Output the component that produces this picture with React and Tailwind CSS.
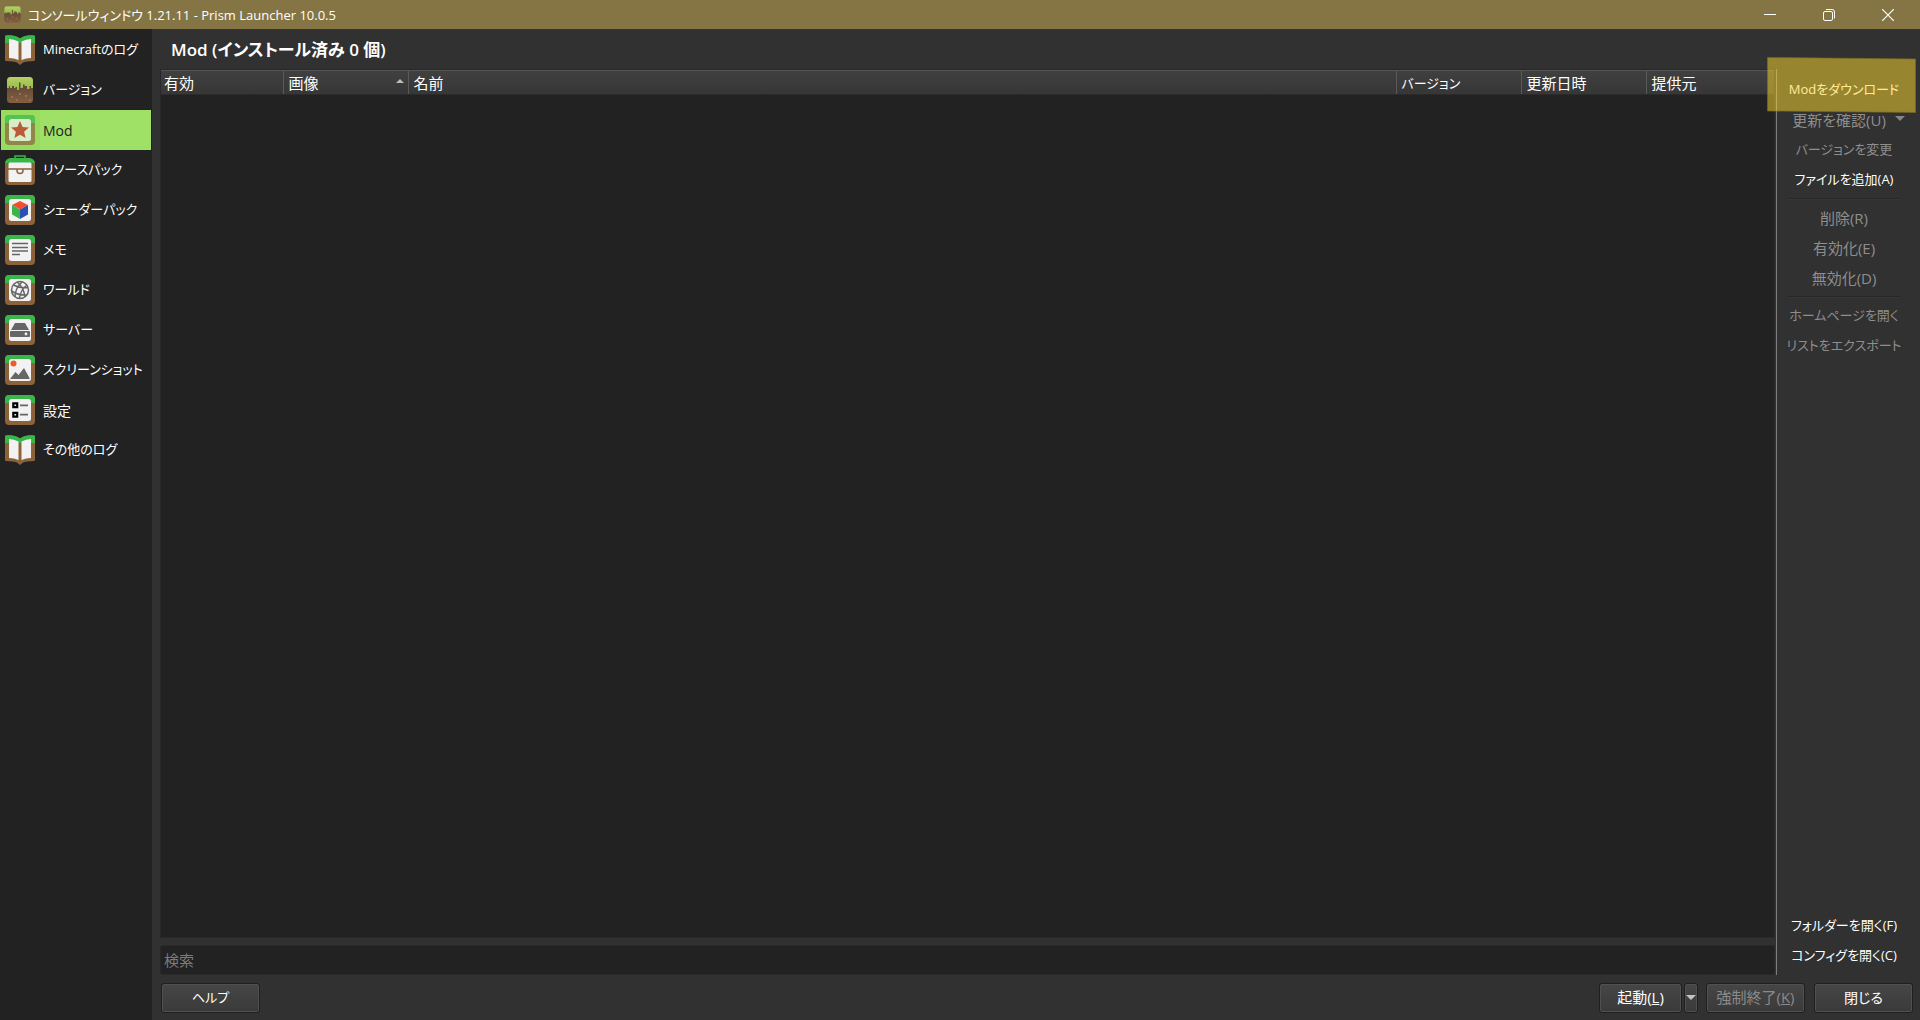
import React, { useState } from "react";

const GRASS =
  "M0 8V4a4 4 0 0 1 4-4h22a4 4 0 0 1 4 4v4h-4V6a2 2 0 0 0-2-2H6a2 2 0 0 0-2 2v2z";

/** Grass block frame that most of the page icons sit in. */
const BlockIcon = ({ tinted = false, children }) => (
  <svg viewBox="0 0 30 30" className="w-[30px] h-[30px] shrink-0" aria-hidden="true">
    <rect width="30" height="30" rx="4" fill={tinted ? "#91864a" : "#8b6239"} />
    <path d={GRASS} fill={tinted ? "#54c353" : "#39b54a"} />
    <rect x="4" y="4" width="22" height="22" rx="2.5" fill={tinted ? "#d9eec8" : "#f2f2f2"} />
    {children}
  </svg>
);

const LogIcon = () => (
  <svg viewBox="0 0 30 30" className="w-[30px] h-[30px] shrink-0" aria-hidden="true">
    <path d="M0 1.5Q0 .5 1 .5C6 0 11 .5 15 3.5 19 .5 24 0 29 .5q1 0 1 1V25q0 1-1 1-7 0-11 1.5L15 30l-3-2.5Q8 26 1 26q-1 0-1-1z" fill="#8b6239" />
    <path d="M0 1.5Q0 .5 1 .5C6 0 11 .5 15 3.5 19 .5 24 0 29 .5q1 0 1 1V8h-4V5L15 8 4 5v3H0z" fill="#39b54a" />
    <path d="M4 4q5 0 9.500 2.500V25Q9 23 4 23zM26 4q-5 0-9.500 2.500V25q4.500-2 9.500-2z" fill="#f2f2f2" />
  </svg>
);

const GrassIcon = ({ className = "w-[30px] h-[30px] shrink-0" }) => (
  <svg viewBox="0 0 30 30" className={className} aria-hidden="true">
    <defs>
      <linearGradient id="dirt" x1="0" y1="0" x2="0" y2="1">
        <stop offset="0" stopColor="#4f3a2a" />
        <stop offset=".5" stopColor="#6b4e3a" />
        <stop offset="1" stopColor="#85603f" />
      </linearGradient>
      <linearGradient id="turf" x1="0" y1="0" x2="0" y2="1">
        <stop offset="0" stopColor="#b8d067" />
        <stop offset="1" stopColor="#8fbb45" />
      </linearGradient>
    </defs>
    <rect x="2" y="2" width="26" height="26" rx="3.500" fill="url(#dirt)" />
    <path d="M2 13V5.500Q2 2 5.500 2h19Q28 2 28 5.500V13h-2v-2h-1.500v3H22v-3h-2.500v-1.500H18V13h-2.500V7.500h-1.500V15h-2v-3h-1.500v1H9v-2H7v2H5v-2H4v2z" fill="url(#turf)" />
    <path d="M6 21h2v2H6zM14 18h2v2h-2zM20 20h2v2h-2zM24 24h2v2h-2zM11 24h2v2h-2z" fill="#97704f" />
  </svg>
);

const ModIcon = () => (
  <BlockIcon tinted>
    <path d="M15 6l2.600 6 6.400.600-4.900 4.200 1.500 6.200-5.600-3.300L9.400 23l1.500-6.200L6 12.600l6.400-.600z" fill="#b85c38" />
  </BlockIcon>
);

const ResourceIcon = () => (
  <svg viewBox="0 0 30 30" className="w-[30px] h-[30px] shrink-0" aria-hidden="true">
    <path d="M10 4V1h10v3" fill="none" stroke="#39b54a" strokeWidth="1.500" />
    <path d="M0 8q0-2 2-3.500Q4 3 6 3h18q2 0 4 1.500Q30 6 30 8v18a4 4 0 0 1-4 4H4a4 4 0 0 1-4-4z" fill="#8b6239" />
    <path d="M0 8q0-2 2-3.500Q4 3 6 3h18q2 0 4 1.500Q30 6 30 8z" fill="#39b54a" />
    <rect x="3.500" y="7.500" width="23" height="19.500" rx="1.500" fill="#f2f2f2" />
    <path d="M3 14h24M12 14v1.500a3 3 0 0 0 6 0V14" fill="none" stroke="#8b6239" strokeWidth="1.500" />
  </svg>
);

const ShaderIcon = () => (
  <BlockIcon>
    <path d="M15 6l8 4-8 4.500L7 10z" fill="#f1502f" />
    <path d="M7 10l8 4.500V24l-8-4.500z" fill="#39b54a" />
    <path d="M23 10l-8 4.500V24l8-4.500z" fill="#2a4fb0" />
  </BlockIcon>
);

const NotesIcon = () => (
  <BlockIcon>
    <path d="M7 8.500h16M7 12.500h16M7 16h16M7 19.500h8" stroke="#666" strokeWidth="1.700" />
  </BlockIcon>
);

const WorldIcon = () => (
  <BlockIcon>
    <g fill="none" stroke="#666" strokeWidth="1.500">
      <circle cx="15" cy="15" r="8.500" />
      <path d="M8.500 10q6 3.500 14.500 2.500M6.500 16q7 4.500 15.500 4M12 7q6.500 4.500 8 15M17.500 6.500Q10 13 10 22M22 10q-6.500 5-7.500 13" />
    </g>
  </BlockIcon>
);

const ServerIcon = () => (
  <BlockIcon>
    <path d="M10 8h10l4 7H6z" fill="#666" />
    <rect x="5" y="16" width="20" height="6" rx="1" fill="#666" />
    <circle cx="21" cy="19" r="1.400" fill="#f2f2f2" />
  </BlockIcon>
);

const ScreenshotIcon = () => (
  <BlockIcon>
    <circle cx="8.500" cy="8.500" r="3" fill="#f15a29" />
    <path d="M5 24l5.500-7 3 3L19 13l5.500 10v1z" fill="#666" />
  </BlockIcon>
);

const SettingsIcon = () => (
  <BlockIcon>
    <path d="M8.300 8.300h3.900v3.900H8.300zM8.300 17.800h3.900v3.900H8.300z" fill="none" stroke="#000" strokeWidth="2.200" />
    <path d="M15 10.300h8M15 19.700h8" stroke="#666" strokeWidth="1.700" />
  </BlockIcon>
);

const PAGES = [
  { id: "log", label: "Minecraftのログ", Icon: LogIcon },
  { id: "version", label: "バージョン", Icon: GrassIcon },
  { id: "mods", label: "Mod", Icon: ModIcon, wide: true },
  { id: "resource", label: "リソースパック", Icon: ResourceIcon },
  { id: "shader", label: "シェーダーパック", Icon: ShaderIcon },
  { id: "notes", label: "メモ", Icon: NotesIcon },
  { id: "worlds", label: "ワールド", Icon: WorldIcon },
  { id: "servers", label: "サーバー", Icon: ServerIcon },
  { id: "screenshots", label: "スクリーンショット", Icon: ScreenshotIcon },
  { id: "settings", label: "設定", Icon: SettingsIcon, wide: true },
  { id: "otherlogs", label: "その他のログ", Icon: LogIcon },
];

const COLUMNS = [
  { label: "有効", width: "w-[122px]", text: "pl-[3px] text-[15px]" },
  { label: "画像", width: "w-[125px]", text: "pl-[5px] text-[15px]", sorted: true },
  { label: "名前", width: "w-auto", text: "pl-[5px] text-[15px]" },
  { label: "バージョン", width: "w-[125px]", text: "pl-[5px] text-[13px]" },
  { label: "更新日時", width: "w-[125px]", text: "pl-[5px] text-[15px]" },
  { label: "提供元", width: "w-[128px]", text: "pl-[5px] text-[15px]" },
];

const TitleBar = () => (
  <header className="flex items-center h-[29px] px-[3px] bg-[#857545] shrink-0">
    <GrassIcon className="w-[19px] h-[19px] shrink-0" />
    <h1 className="ml-1.5 text-[13px] leading-5 text-white whitespace-nowrap">
      コンソールウィンドウ 1.21.11 - Prism Launcher 10.0.5
    </h1>
    <div className="flex h-full ml-auto">
      <button type="button" aria-label="最小化" className="flex items-center justify-center w-[59px]">
        <svg viewBox="0 0 12 12" className="w-3 h-3" aria-hidden="true">
          <path d="M0 5.500h12" stroke="#fff" />
        </svg>
      </button>
      <button type="button" aria-label="元に戻す" className="flex items-center justify-center w-[59px]">
        <svg viewBox="0 0 12 12" className="w-3 h-3" fill="none" stroke="#fff" aria-hidden="true">
          <rect x=".5" y="2.500" width="9" height="9" rx="1.500" />
          <path d="M3 .5h6a2.500 2.500 0 0 1 2.500 2.500v6.500" />
        </svg>
      </button>
      <button type="button" aria-label="閉じる" className="flex items-center justify-center w-[59px]">
        <svg viewBox="0 0 12 12" className="w-3 h-3" aria-hidden="true">
          <path d="M0 0l12 12M12 0L0 12" stroke="#fff" strokeWidth="1.200" />
        </svg>
      </button>
    </div>
  </header>
);

const Sidebar = ({ active, onSelect }) => (
  <nav className="w-[152px] shrink-0 pt-px px-px bg-[#222222]">
    {PAGES.map(({ id, label, Icon, wide }) => (
      <button
        key={id}
        type="button"
        onClick={() => onSelect(id)}
        className={`flex items-center w-full h-10 pl-1 text-left ${
          active === id ? "bg-[#97dc5e] text-[#222222]" : "text-white"
        }`}
      >
        <Icon />
        <span
          className={`flex items-center flex-1 h-full ml-[5px] pl-[3px] whitespace-nowrap ${
            wide ? "text-[14px]" : "text-[13px]"
          } ${active === id ? "bg-[#9fe067]" : ""}`}
        >
          {label}
        </span>
      </button>
    ))}
  </nav>
);

const ModTable = () => (
  <div className="flex-1 border border-[#282828] bg-[#222222]">
    <table className="w-full table-fixed border-collapse">
      <thead>
        <tr className="h-6 bg-linear-to-b from-[#404040] to-[#363636]">
          {COLUMNS.map(({ label, width, text, sorted }) => (
            <th
              key={label}
              scope="col"
              aria-sort={sorted ? "ascending" : undefined}
              className={`${width} p-0 border-y border-t-[#555555] border-b-[#2b2b2b] border-r border-r-[#5a5a5a] last:border-r-0 font-normal text-left`}
            >
              <div className={`flex items-center justify-between pr-1 leading-[22px] text-white ${text}`}>
                {label}
                {sorted && (
                  <svg viewBox="0 0 8 4" className="w-2 h-1 mb-1" aria-hidden="true">
                    <path d="M0 4l4-4 4 4z" fill="#bdbdbd" />
                  </svg>
                )}
              </div>
            </th>
          ))}
        </tr>
      </thead>
      <tbody />
    </table>
  </div>
);

const Action = ({ enabled = false, size = "text-[13px]", children }) => (
  <button
    type="button"
    disabled={!enabled}
    className={`w-full h-[30px] text-center whitespace-nowrap ${size} ${
      enabled ? "text-white" : "text-[#8e8e8e]"
    }`}
  >
    {children}
  </button>
);

const Divider = () => <hr className="h-0.5 my-[3px] mx-1 border-0 border-t border-t-[#282828] bg-[#363636]" />;

const ActionBar = () => (
  <aside className="relative flex flex-col w-[144px] shrink-0 border-l border-l-[#7d7d7d] pt-1.5 pb-1 pl-1.5">
    <div className="flex flex-col w-[122px]">
      <Action enabled>Modをダウンロード</Action>
      <div className="flex items-center">
        <Action size="text-[15px]">更新を確認(U)</Action>
        {/* drop-down arrow of the update button */}
        <svg viewBox="0 0 10 5" className="w-2.5 h-[5px] mb-1 shrink-0" aria-hidden="true">
          <path d="M0 0h10L5 5z" fill="#858585" />
        </svg>
      </div>
      <Action>バージョンを変更</Action>
      <Action enabled>ファイルを追加(A)</Action>
      <Divider />
      <Action size="text-[15px]">削除(R)</Action>
      <Action size="text-[15px]">有効化(E)</Action>
      <Action size="text-[15px]">無効化(D)</Action>
      <Divider />
      <Action>ホームページを開く</Action>
      <Action>リストをエクスポート</Action>
    </div>
    <div className="flex flex-col w-[122px] mt-auto">
      <Action enabled>フォルダーを開く(F)</Action>
      <Action enabled>コンフィグを開く(C)</Action>
    </div>
    {/* marker over the download action */}
    <svg viewBox="0 0 149 56" className="absolute -left-2.5 -top-3 w-[149px] h-14 pointer-events-none" aria-hidden="true">
      <path d="M.5.500L148.500 2v53.500L.5 54z" fill="#ffd92e" fillOpacity=".5" stroke="#7d6c20" strokeOpacity=".6" />
    </svg>
  </aside>
);

const PushButton = ({ className = "w-[99px] text-[15px]", ...props }) => (
  <button
    type="button"
    className={`h-[30px] flex items-center justify-center rounded-[3px] border border-[#1f1f1f] bg-linear-to-b from-[#464646] to-[#3a3a3a] inset-ring inset-ring-[#505050] text-white whitespace-nowrap disabled:text-[#8a8a8a] ${className}`}
    {...props}
  />
);

const App = () => {
  const [page, setPage] = useState("mods");
  const [query, setQuery] = useState("");

  return (
    <div
      lang="ja"
      className="flex flex-col min-h-screen bg-[#313131] font-['Open_Sans','Noto_Sans_CJK_JP',sans-serif] [font-feature-settings:'palt']"
    >
      <TitleBar />
      <div className="flex flex-1">
        <Sidebar active={page} onSelect={setPage} />
        <main className="flex flex-col flex-1 min-w-0 pl-2">
          <h2 className="h-10 pl-[11px] pt-1 text-[17px] leading-[34px] font-semibold text-white">
            Mod (インストール済み 0 個)
          </h2>
          <div className="flex flex-1">
            <div className="flex flex-col flex-1 min-w-0 gap-[7px] pr-px">
              <ModTable />
              <input
                type="text"
                aria-label="検索"
                placeholder="検索"
                value={query}
                onChange={(e) => setQuery(e.target.value)}
                className="h-[30px] px-[3px] rounded-[3px] border border-[#282828] bg-[#222222] text-[15px] text-white placeholder:text-[#7c7c7c] outline-none"
              />
            </div>
            <ActionBar />
          </div>
          <footer className="flex items-center h-[45px] pl-px pr-[7px]">
            <PushButton className="w-[99px] text-[13px]">ヘルプ</PushButton>
            <div className="flex gap-0.5 ml-auto">
              <PushButton className="w-[83px] text-[15px]">
                <span>
                  起動(<u>L</u>)
                </span>
              </PushButton>
              <PushButton className="w-3.5" aria-label="起動オプション">
                <svg viewBox="0 0 10 5" className="w-2.5 h-[5px] shrink-0" aria-hidden="true">
                  <path d="M0 0h10L5 5z" fill="#c4c4c4" />
                </svg>
              </PushButton>
            </div>
            <div className="flex gap-[9px] ml-2">
              <PushButton disabled>
                <span>
                  強制終了(<u>K</u>)
                </span>
              </PushButton>
              <PushButton className="w-[99px] text-[14px]">閉じる</PushButton>
            </div>
          </footer>
        </main>
      </div>
    </div>
  );
};

export default App;
